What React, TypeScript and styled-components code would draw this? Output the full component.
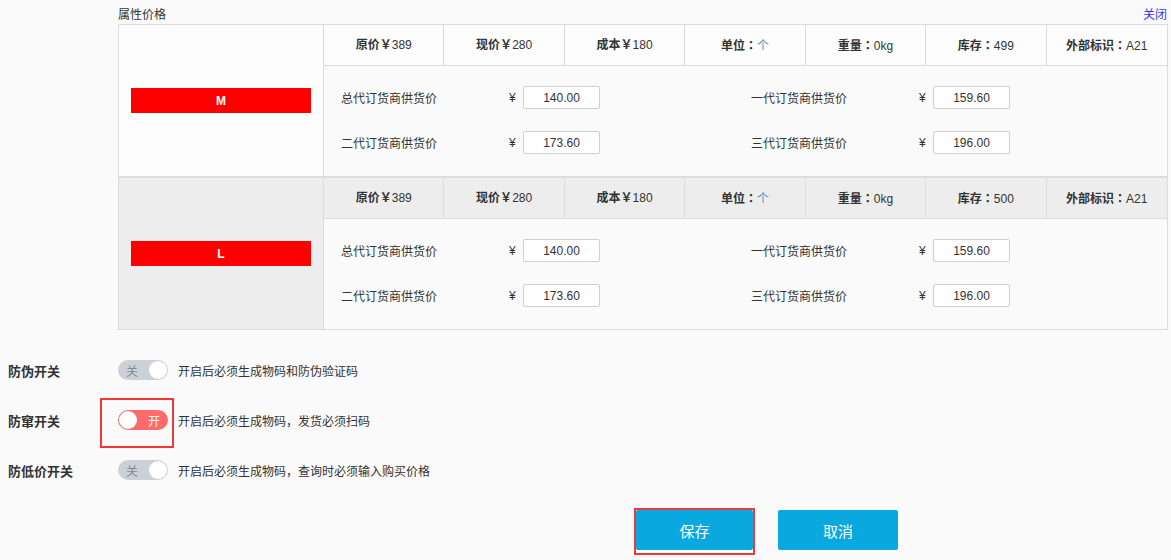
import React from "react";
import styled, { createGlobalStyle } from "styled-components";

const Global = createGlobalStyle`
  html, body { margin: 0; padding: 0; background: #fafafa; }
  body {
    font-family: "Liberation Sans", Arial, "Noto Sans CJK SC", sans-serif;
    font-size: 12px;
    color: #333;
  }
  * { box-sizing: border-box; }
`;

const Page = styled.div`
  width: 1171px;
  height: 560px;
  padding: 0 3px 0 8px;
  overflow: hidden;
`;

const Section = styled.div`
  margin-left: 110px;
  width: 1050px;
`;

const TitleRow = styled.div`
  height: 24px;
  display: flex;
  align-items: center;
  justify-content: space-between;
  padding-top: 3px;
  font-size: 12px;
`;

const CloseLink = styled.a`
  color: #3535f5;
  cursor: pointer;
  margin-right: 1px;
`;

const Block = styled.div`
  display: grid;
  grid-template-columns: 205px 1fr;
  border: 1px solid #dcdcdc;
  height: 153px;
`;

const SkuCell = styled.div<{ $shaded?: boolean }>`
  border-right: 1px solid #dcdcdc;
  background: ${(p) => (p.$shaded ? "#ededed" : "#fdfdfd")};
  display: flex;
  align-items: center;
  justify-content: center;
`;

const SkuTag = styled.div`
  width: 180px;
  height: 25px;
  background: #ff0000;
  color: #fff;
  font-weight: bold;
  font-size: 12px;
  display: flex;
  align-items: center;
  justify-content: center;
`;

const Detail = styled.div`
  display: flex;
  flex-direction: column;
`;

const HeaderRow = styled.div<{ $shaded?: boolean }>`
  display: grid;
  grid-template-columns: repeat(7, 1fr);
  height: 41px;
  border-bottom: 1px solid #dcdcdc;
  background: ${(p) => (p.$shaded ? "#ededed" : "#fdfdfd")};
`;

const HeaderCell = styled.div`
  line-height: 40px;
  text-align: center;
  border-right: 1px solid #dcdcdc;
  font-size: 12px;
  white-space: nowrap;
  &:last-child { border-right: none; }
  b { font-weight: bold; }
`;

const Colon = styled.span`
  font-family: "Noto Sans CJK TC", sans-serif;
  font-weight: bold;
`;

const Unit = styled.span`
  color: #5b8fc4;
`;

const PriceArea = styled.div`
  flex: 1;
  background: #fafafa;
  display: grid;
  grid-template-columns: 410px 410px;
  grid-auto-rows: 23px;
  row-gap: 22px;
  padding: 20px 0 0 17px;
`;

const PriceGroup = styled.div`
  display: grid;
  grid-template-columns: 168px 14px 77px;
  align-items: center;
`;

const PriceLabel = styled.span`
  font-size: 12px;
`;

const Yen = styled.span`
  font-size: 12px;
`;

const PriceInput = styled.input`
  width: 77px;
  height: 23px;
  border: 1px solid #cfcfcf;
  border-radius: 2px;
  background: #fff;
  text-align: center;
  font-family: inherit;
  font-size: 12px;
  color: #333;
  padding: 0;
  outline: none;
`;

const Switches = styled.div`
  margin-top: 15px;
`;

const SwitchRow = styled.div`
  height: 50px;
  display: flex;
  align-items: center;
`;

const SwitchLabel = styled.div`
  width: 110px;
  font-weight: bold;
  font-size: 13px;
`;

const ToggleWrap = styled.div`
  position: relative;
  width: 50px;
  height: 20px;
`;

const Toggle = styled.div<{ $on?: boolean }>`
  width: 50px;
  height: 20px;
  border-radius: 10px;
  background: ${(p) => (p.$on ? "#ff6b6b" : "#ccd1d8")};
  display: flex;
  align-items: center;
  flex-direction: ${(p) => (p.$on ? "row" : "row-reverse")};
  padding: 0 1px;
  justify-content: space-between;
`;

const Knob = styled.span`
  width: 18px;
  height: 18px;
  border-radius: 50%;
  background: #fff;
`;

const ToggleText = styled.span<{ $on?: boolean }>`
  font-size: 12px;
  color: ${(p) => (p.$on ? "#fff" : "#7d8b90")};
  width: 26px;
  text-align: center;
`;

const Highlight = styled.div`
  position: absolute;
  left: -18px;
  top: -12px;
  width: 74px;
  height: 50px;
  border: 2px solid #f03838;
  pointer-events: none;
`;

const SwitchDesc = styled.div`
  margin-left: 10px;
  font-size: 12px;
`;

const ButtonRow = styled.div`
  margin-top: 13px;
  padding-left: 626px;
  display: flex;
  align-items: flex-start;
  gap: 23px;
`;

const Outline = styled.div`
  border: 2px solid #f03838;
  padding-bottom: 3px;
  background: #fff;
`;

const Button = styled.button<{ $w?: number; $offset?: number }>`
  width: ${(p) => p.$w ?? 120}px;
  height: 40px;
  margin-top: ${(p) => p.$offset ?? 0}px;
  border: none;
  border-radius: 2px;
  background: #09a8df;
  color: #fff;
  font-size: 15px;
  font-family: inherit;
  display: block;
  cursor: pointer;
`;

type Sku = {
  name: string;
  stock: number;
  shaded?: boolean;
};

const skus: Sku[] = [
  { name: "M", stock: 499 },
  { name: "L", stock: 500, shaded: true },
];

const prices = [
  ["总代订货商供货价", "140.00"],
  ["一代订货商供货价", "159.60"],
  ["二代订货商供货价", "173.60"],
  ["三代订货商供货价", "196.00"],
];

function SkuBlock({ sku }: { sku: Sku }) {
  return (
    <Block>
      <SkuCell $shaded={sku.shaded}>
        <SkuTag>{sku.name}</SkuTag>
      </SkuCell>
      <Detail>
        <HeaderRow $shaded={sku.shaded}>
          <HeaderCell><b>原价￥</b>389</HeaderCell>
          <HeaderCell><b>现价￥</b>280</HeaderCell>
          <HeaderCell><b>成本￥</b>180</HeaderCell>
          <HeaderCell><b>单位</b><Colon>：</Colon><Unit>个</Unit></HeaderCell>
          <HeaderCell><b>重量</b><Colon>：</Colon>0kg</HeaderCell>
          <HeaderCell><b>库存</b><Colon>：</Colon>{sku.stock}</HeaderCell>
          <HeaderCell><b>外部标识</b><Colon>：</Colon>A21</HeaderCell>
        </HeaderRow>
        <PriceArea>
          {prices.map(([label, value]) => (
            <PriceGroup key={label}>
              <PriceLabel>{label}</PriceLabel>
              <Yen>¥</Yen>
              <PriceInput defaultValue={value} />
            </PriceGroup>
          ))}
        </PriceArea>
      </Detail>
    </Block>
  );
}

const switches = [
  { label: "防伪开关", on: false, desc: "开启后必须生成物码和防伪验证码" },
  { label: "防窜开关", on: true, desc: "开启后必须生成物码，发货必须扫码", mark: true },
  { label: "防低价开关", on: false, desc: "开启后必须生成物码，查询时必须输入购买价格" },
];

export default function App() {
  return (
    <Page>
      <Global />
      <Section>
        <TitleRow>
          <span>属性价格</span>
          <CloseLink>关闭</CloseLink>
        </TitleRow>
        {skus.map((s) => (
          <SkuBlock key={s.name} sku={s} />
        ))}
      </Section>
      <Switches>
        {switches.map((s) => (
          <SwitchRow key={s.label}>
            <SwitchLabel>{s.label}</SwitchLabel>
            <ToggleWrap>
              <Toggle $on={s.on}>
                <Knob />
                <ToggleText $on={s.on}>{s.on ? "开" : "关"}</ToggleText>
              </Toggle>
              {s.mark && <Highlight />}
            </ToggleWrap>
            <SwitchDesc>{s.desc}</SwitchDesc>
          </SwitchRow>
        ))}
      </Switches>
      <ButtonRow>
        <Outline>
          <Button $w={117}>保存</Button>
        </Outline>
        <Button $offset={2}>取消</Button>
      </ButtonRow>
    </Page>
  );
}
